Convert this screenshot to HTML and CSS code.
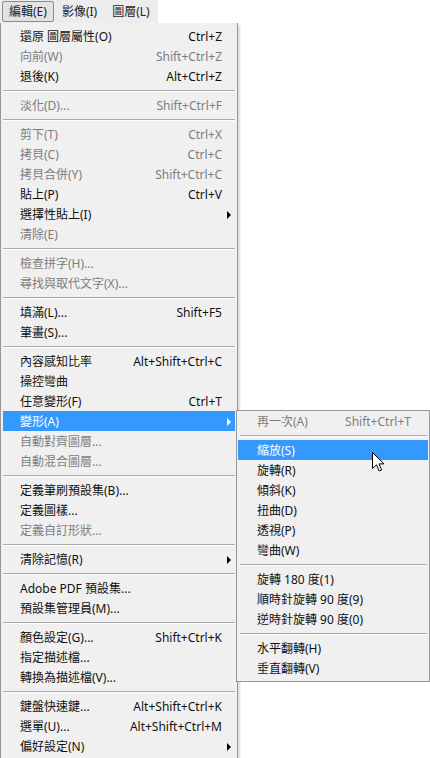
FILE: index.html
```html
<!doctype html>
<html lang="zh-Hant">
<head>
    <meta charset="UTF-8" />
    <title>編輯選單</title>
    <link rel="stylesheet" href="styles.css">
</head>
<body>
    <div class="menubar">
        <span class="topItem active">編輯(E)</span>
        <span class="topItem">影像(I)</span>
        <span class="topItem">圖層(L)</span>
    </div>

    <div class="stage">
        <div class="menu">
            <div class="row"><span>還原 圖層屬性(O)</span><span class="key">Ctrl+Z</span><span class="arr"></span></div>
            <div class="row off"><span>向前(W)</span><span class="key">Shift+Ctrl+Z</span><span class="arr"></span></div>
            <div class="row"><span>退後(K)</span><span class="key">Alt+Ctrl+Z</span><span class="arr"></span></div>
            <div class="sep"></div>
            <div class="row off"><span>淡化(D)...</span><span class="key">Shift+Ctrl+F</span><span class="arr"></span></div>
            <div class="sep"></div>
            <div class="row off"><span>剪下(T)</span><span class="key">Ctrl+X</span><span class="arr"></span></div>
            <div class="row off"><span>拷貝(C)</span><span class="key">Ctrl+C</span><span class="arr"></span></div>
            <div class="row off"><span>拷貝合併(Y)</span><span class="key">Shift+Ctrl+C</span><span class="arr"></span></div>
            <div class="row"><span>貼上(P)</span><span class="key">Ctrl+V</span><span class="arr"></span></div>
            <div class="row"><span>選擇性貼上(I)</span><span class="key"></span><span class="arr sub"></span></div>
            <div class="row off"><span>清除(E)</span><span class="key"></span><span class="arr"></span></div>
            <div class="sep"></div>
            <div class="row off"><span>檢查拼字(H)...</span><span class="key"></span><span class="arr"></span></div>
            <div class="row off"><span>尋找與取代文字(X)...</span><span class="key"></span><span class="arr"></span></div>
            <div class="sep"></div>
            <div class="row"><span>填滿(L)...</span><span class="key">Shift+F5</span><span class="arr"></span></div>
            <div class="row"><span>筆畫(S)...</span><span class="key"></span><span class="arr"></span></div>
            <div class="sep"></div>
            <div class="row"><span>內容感知比率</span><span class="key">Alt+Shift+Ctrl+C</span><span class="arr"></span></div>
            <div class="row"><span>操控彎曲</span><span class="key"></span><span class="arr"></span></div>
            <div class="row"><span>任意變形(F)</span><span class="key">Ctrl+T</span><span class="arr"></span></div>
            <div class="row hot"><span>變形(A)</span><span class="key"></span><span class="arr sub"></span></div>
            <div class="row off"><span>自動對齊圖層...</span><span class="key"></span><span class="arr"></span></div>
            <div class="row off"><span>自動混合圖層...</span><span class="key"></span><span class="arr"></span></div>
            <div class="sep"></div>
            <div class="row"><span>定義筆刷預設集(B)...</span><span class="key"></span><span class="arr"></span></div>
            <div class="row"><span>定義圖樣...</span><span class="key"></span><span class="arr"></span></div>
            <div class="row off"><span>定義自訂形狀...</span><span class="key"></span><span class="arr"></span></div>
            <div class="sep"></div>
            <div class="row"><span>清除記憶(R)</span><span class="key"></span><span class="arr sub"></span></div>
            <div class="sep"></div>
            <div class="row"><span>Adobe PDF 預設集...</span><span class="key"></span><span class="arr"></span></div>
            <div class="row"><span>預設集管理員(M)...</span><span class="key"></span><span class="arr"></span></div>
            <div class="sep"></div>
            <div class="row"><span>顏色設定(G)...</span><span class="key">Shift+Ctrl+K</span><span class="arr"></span></div>
            <div class="row"><span>指定描述檔...</span><span class="key"></span><span class="arr"></span></div>
            <div class="row"><span>轉換為描述檔(V)...</span><span class="key"></span><span class="arr"></span></div>
            <div class="sep"></div>
            <div class="row"><span>鍵盤快速鍵...</span><span class="key">Alt+Shift+Ctrl+K</span><span class="arr"></span></div>
            <div class="row"><span>選單(U)...</span><span class="key">Alt+Shift+Ctrl+M</span><span class="arr"></span></div>
            <div class="row"><span>偏好設定(N)</span><span class="key"></span><span class="arr sub"></span></div>
        </div>

        <div class="submenu">
            <div class="row off"><span>再一次(A)</span><span class="key">Shift+Ctrl+T</span></div>
            <div class="sep"></div>
            <div class="row hot"><span>縮放(S)</span><span class="key"></span></div>
            <div class="row"><span>旋轉(R)</span><span class="key"></span></div>
            <div class="row"><span>傾斜(K)</span><span class="key"></span></div>
            <div class="row"><span>扭曲(D)</span><span class="key"></span></div>
            <div class="row"><span>透視(P)</span><span class="key"></span></div>
            <div class="row"><span>彎曲(W)</span><span class="key"></span></div>
            <div class="sep"></div>
            <div class="row"><span>旋轉 180 度(1)</span><span class="key"></span></div>
            <div class="row"><span>順時針旋轉 90 度(9)</span><span class="key"></span></div>
            <div class="row"><span>逆時針旋轉 90 度(0)</span><span class="key"></span></div>
            <div class="sep"></div>
            <div class="row"><span>水平翻轉(H)</span><span class="key"></span></div>
            <div class="row"><span>垂直翻轉(V)</span><span class="key"></span></div>
        </div>

        <svg class="cursor" width="13" height="20" viewBox="0 0 13 20">
            <path d="M0.5 0.5 L0.5 16.5 L4.5 12.8 L7.2 19 L9.6 18 L7 11.9 L12 11.9 Z" fill="#fff" stroke="#000" stroke-width="1" stroke-linejoin="miter"/>
        </svg>
    </div>
</body>
</html>
```

FILE: styles.css
```css
html, body {
    margin: 0;
    padding: 0;
    background: #fff;
    height: 100%;
    overflow: hidden;
}
body {
    font-family: "Noto Sans", "Noto Sans CJK TC", sans-serif;
    font-size: 12px;
    color: #111;
}
.menubar {
    display: flex;
    align-items: center;
    gap: 1px;
    width: 158px;
    height: 23px;
    background: #ececec;
    padding-left: 2px;
    box-sizing: border-box;
}
.topItem {
    display: block;
    flex-shrink: 0;
    white-space: nowrap;
    height: 19px;
    line-height: 20px;
    padding: 0 6px;
    border: 1px solid transparent;
    color: #222;
}
.topItem.active {
    background: #e2e2e2;
    border-color: #8c8c8c;
    border-radius: 2px;
}
.stage {
    position: relative;
}
.menu {
    width: 238px;
    box-sizing: border-box;
    background: #f0f0f0;
    border: 1px solid #979797;
    border-top: none;
    padding: 3px 2px 2px 2px;
    box-shadow: 2px 2px 2px rgba(0,0,0,0.15);
}
.row {
    display: grid;
    grid-template-columns: 1fr auto 13px;
    align-items: center;
    height: 20px;
    line-height: 21px;
    padding-left: 17px;
    white-space: nowrap;
}
.row.off {
    color: #7d7d7d;
}
.row.hot {
    background: #3399ff;
    color: #fff;
}
.key {
    text-align: right;
}
.arr.sub {
    position: relative;
    height: 20px;
}
.arr.sub::after {
    content: "";
    position: absolute;
    left: 5px;
    top: 6px;
    border-left: 4px solid #000;
    border-top: 4px solid transparent;
    border-bottom: 4px solid transparent;
}
.row.hot .arr.sub::after {
    border-left-color: #fff;
}
.sep {
    height: 9px;
    position: relative;
}
.sep::before {
    content: "";
    position: absolute;
    left: 0;
    right: 0;
    top: 4px;
    border-top: 1px solid #a9a9a9;
    border-bottom: 1px solid #fff;
}
.submenu {
    position: absolute;
    left: 236px;
    top: 387px;
    width: 194px;
    box-sizing: border-box;
    background: #f0f0f0;
    border: 1px solid #979797;
    padding: 0 1px 3px 1px;
}
.submenu .row {
    grid-template-columns: 1fr auto;
    padding-left: 19px;
    padding-right: 17px;
}
.submenu .sep::before {
    left: 2px;
    right: 1px;
}
.cursor {
    position: absolute;
    left: 372px;
    top: 429px;
}
```
